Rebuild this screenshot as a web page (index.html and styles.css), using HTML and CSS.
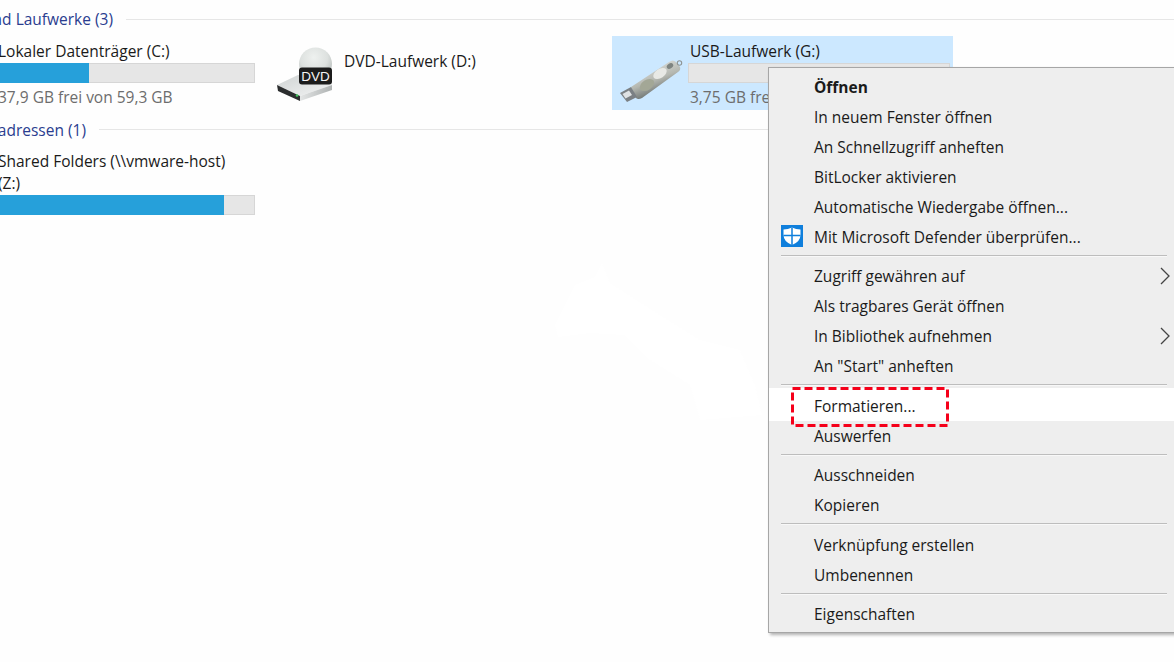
FILE: index.html
```html
<!DOCTYPE html>
<html lang="de">
<head>
<meta charset="utf-8">
<title>Dieser PC</title>
<link rel="stylesheet" href="styles.css">
</head>
<body>
<main class="explorer">
  <header class="group-head">
    <span class="group-label group-label-drives">Geräte und Laufwerke (3)</span>
    <span class="group-rule"></span>
  </header>
  <section class="tiles">
    <article class="tile">
      <div class="tile-icon"></div>
      <div class="tile-body">
        <div class="tile-name">Lokaler Datenträger (C:)</div>
        <div class="bar"><div class="bar-fill bar-fill-c"></div></div>
        <div class="tile-sub">37,9 GB frei von 59,3 GB</div>
      </div>
    </article>
    <article class="tile">
      <div class="tile-icon tile-icon-dvd">
        <svg class="dvd-icon" viewBox="0 0 56 56" width="56" height="56">
          <defs>
            <radialGradient id="discGrad" cx="0.45" cy="0.3" r="0.75">
              <stop offset="0" stop-color="#eef1ef"/>
              <stop offset="0.55" stop-color="#dde1df"/>
              <stop offset="1" stop-color="#aeb4b2"/>
            </radialGradient>
            <linearGradient id="boxTop" x1="0" y1="0" x2="1" y2="1">
              <stop offset="0" stop-color="#cfd3d3"/>
              <stop offset="1" stop-color="#f3f4f4"/>
            </linearGradient>
            <linearGradient id="boxSide" x1="0" y1="0" x2="1" y2="0">
              <stop offset="0" stop-color="#e4e6e6"/>
              <stop offset="1" stop-color="#aeb2b2"/>
            </linearGradient>
          </defs>
          <circle cx="39.500" cy="17" r="16.500" fill="url(#discGrad)"/>
          <path d="M1 38 L22 28 L56 30 L56 38 L24 49 Z" fill="url(#boxTop)"/>
          <path d="M1 38 L24 49 L24 54 L2 44 Z" fill="#2b2d2e"/>
          <path d="M24 49 L56 38 L56 43 L24 54 Z" fill="url(#boxSide)"/>
          <circle cx="21" cy="48.500" r="1.300" fill="#3fc25a"/>
          <rect x="23" y="20.500" width="33" height="17" rx="3" fill="#1c1c1c"/>
          <text class="dvd-label" x="39.500" y="34" text-anchor="middle">DVD</text>
        </svg>
      </div>
      <div class="tile-body tile-body-dvd">
        <div class="tile-name">DVD-Laufwerk (D:)</div>
      </div>
    </article>
    <article class="tile tile-selected">
      <div class="tile-icon tile-icon-usb">
        <svg class="usb-icon" viewBox="0 0 64 48" width="64" height="48">
          <defs>
            <linearGradient id="usbBody" x1="0.35" y1="0.2" x2="0.65" y2="0.8">
              <stop offset="0" stop-color="#d4d6d2"/>
              <stop offset="0.5" stop-color="#b4b7b0"/>
              <stop offset="1" stop-color="#6f7573"/>
            </linearGradient>
          </defs>
          <path d="M12 32 L50 7 Q54 4 57 7 L61 12 Q62 15 59 17 L23 43 Q19 45 17 43 Z" fill="url(#usbBody)"/>
          <ellipse cx="41" cy="18.500" rx="7.500" ry="4.500" transform="rotate(-34 41 18.500)" fill="#e8e9e5"/>
          <ellipse cx="28" cy="30" rx="8" ry="5" transform="rotate(-34 28 30)" fill="#a3a796"/>
          <ellipse cx="51" cy="11" rx="3.500" ry="2.500" transform="rotate(-34 51 11)" fill="#7e8481"/>
          <path d="M1 38 L12 32 L18 42 L8 47 Z" fill="#7b8084"/>
          <path d="M3.500 39 L10 35.500 L13 40 L6.500 43.500 Z" fill="#dfe2e4"/>
          <circle cx="60.500" cy="8" r="2.200" fill="none" stroke="#8f9595" stroke-width="1.100"/>
        </svg>
      </div>
      <div class="tile-body">
        <div class="tile-name">USB-Laufwerk (G:)</div>
        <div class="bar"><div class="bar-fill bar-fill-g"></div></div>
        <div class="tile-sub">3,75 GB frei von 3,75 GB</div>
      </div>
    </article>
  </section>
  <header class="group-head group-head-net">
    <span class="group-label group-label-net">Netzwerkadressen (1)</span>
    <span class="group-rule"></span>
  </header>
  <section class="tiles tiles-net">
    <article class="tile tile-net">
      <div class="tile-icon"></div>
      <div class="tile-body">
        <div class="tile-name">Shared Folders (\\vmware-host)</div>
        <div class="tile-name">(Z:)</div>
        <div class="bar"><div class="bar-fill bar-fill-z"></div></div>
      </div>
    </article>
  </section>
</main>

<svg class="watermark" viewBox="0 0 220 170" width="220" height="170">
  <path d="M5 70 L25 30 L45 22 L52 8 L60 28 L110 60 L150 85 L190 95 L205 130 L212 160 L150 165 L140 130 L100 105 L75 80 L40 78 L8 82 Z" fill="#ffffff"/>
</svg>

<nav class="menu">
  <div class="menu-item menu-item-default">Öffnen</div>
  <div class="menu-item">In neuem Fenster öffnen</div>
  <div class="menu-item">An Schnellzugriff anheften</div>
  <div class="menu-item">BitLocker aktivieren</div>
  <div class="menu-item">Automatische Wiedergabe öffnen...</div>
  <div class="menu-item">
    <svg class="shield" viewBox="0 0 22 22" width="22" height="22">
      <rect width="22" height="22" fill="#0f7fdc"/>
      <path d="M11 2.500 Q15 4.500 19.500 4.500 L19.500 10 Q19.500 16.500 11 20 Q2.500 16.500 2.500 10 L2.500 4.500 Q7 4.500 11 2.500 Z" fill="#ffffff"/>
      <path d="M11 2.500 V20 M2.500 10.500 H19.500" stroke="#0f7fdc" stroke-width="1.500"/>
    </svg>
    Mit Microsoft Defender überprüfen...
  </div>
  <div class="menu-sep"></div>
  <div class="menu-item">Zugriff gewähren auf
    <svg class="chevron" viewBox="0 0 10 18" width="10" height="18"><path d="M1 1 L9 9 L1 17" fill="none" stroke="#444" stroke-width="1.300"/></svg>
  </div>
  <div class="menu-item">Als tragbares Gerät öffnen</div>
  <div class="menu-item">In Bibliothek aufnehmen
    <svg class="chevron" viewBox="0 0 10 18" width="10" height="18"><path d="M1 1 L9 9 L1 17" fill="none" stroke="#444" stroke-width="1.300"/></svg>
  </div>
  <div class="menu-item">An "Start" anheften</div>
  <div class="menu-sep"></div>
  <div class="menu-item menu-item-hot">Formatieren...
    <svg class="callout" viewBox="0 0 158 40" width="158" height="40">
      <rect x="1.500" y="1.500" width="155" height="37" fill="none" stroke="#f5001a" stroke-width="3" stroke-dasharray="8 4"/>
    </svg>
  </div>
  <div class="menu-item">Auswerfen</div>
  <div class="menu-sep"></div>
  <div class="menu-item">Ausschneiden</div>
  <div class="menu-item">Kopieren</div>
  <div class="menu-sep"></div>
  <div class="menu-item">Verknüpfung erstellen</div>
  <div class="menu-item">Umbenennen</div>
  <div class="menu-sep"></div>
  <div class="menu-item">Eigenschaften</div>
</nav>
</body>
</html>
```
FILE: styles.css
```css
html, body {
  margin: 0;
  height: 662px;
  overflow: hidden;
  background: #fefefe;
}
body {
  font-family: "Open Sans", "Noto Sans", "Liberation Sans", sans-serif;
  font-size: 15.500px;
  color: #1a1a1a;
  position: relative;
}
.explorer {
  margin-left: -80px;
  padding-top: 8px;
}
.group-head {
  display: flex;
  align-items: center;
  height: 22px;
  color: #2a3d8f;
}
.group-head-net {
  margin-top: 8.500px;
}
.group-label {
  display: block;
  text-align: right;
  white-space: nowrap;
  flex: none;
}
.group-label-drives { width: 193px; }
.group-label-net { width: 166px; }
.group-rule {
  flex: 1;
  height: 1px;
  margin-left: 13px;
  background: #e6e6e6;
}
.tiles {
  display: grid;
  grid-template-columns: repeat(3, 341px);
  column-gap: 5px;
  margin-top: 6px;
}
.tiles-net { margin-top: 5.500px; }
.tile {
  display: flex;
  height: 74px;
  box-sizing: border-box;
  padding-top: 4px;
}
.tile-net { height: auto; }
.tile-selected { background: #cce8ff; }
.tile-selected .bar { margin-right: -3px; }
.tile-icon {
  flex: none;
  width: 76px;
}
.tile-icon-dvd { padding: 7px 0 0 10px; box-sizing: border-box; }
.tile-icon-usb { padding: 15px 0 0 7px; box-sizing: border-box; }
.tile-body { width: 259px; }
.tile-body-dvd { padding-top: 10px; }
.tile-name {
  line-height: 22px;
  padding-left: 2px;
  white-space: nowrap;
}
.tile-sub {
  line-height: 22px;
  margin-top: 3px;
  padding-left: 2px;
  color: #6d6d6d;
  white-space: nowrap;
}
.bar {
  height: 20px;
  margin-top: 1px;
  background: #e6e6e6;
  box-shadow: inset 0 0 0 1px #d6d6d6;
}
.bar-fill { height: 100%; background: #26a0da; }
.bar-fill-c { width: 93px; }
.bar-fill-g { width: 0; }
.bar-fill-z { width: 228px; }
.dvd-icon, .usb-icon, .shield, .chevron { display: block; }
.dvd-label {
  font-family: "Liberation Sans", sans-serif;
  font-size: 13.500px;
  fill: #f4f4f4;
}
.watermark {
  position: absolute;
  left: 550px;
  top: 255px;
}
.menu {
  position: absolute;
  left: 768px;
  top: 67px;
  width: 420px;
  box-sizing: border-box;
  padding: 3.500px 0 2.500px;
  background: #eeeeee;
  border: 1px solid #a6a6a6;
  box-shadow: 2px 2px 3px rgba(0, 0, 0, 0.3);
}
.menu-item {
  position: relative;
  display: flex;
  align-items: center;
  height: 30px;
  padding-left: 45px;
  white-space: nowrap;
  color: #1a1a1a;
}
.menu-item-default { font-weight: 700; }
.menu-item-hot {
  background: #ffffff;
  margin-top: -3px;
  height: 33px;
  padding-top: 3px;
  box-sizing: border-box;
}
.menu-sep {
  height: 9.500px;
  margin-right: 20px;
  margin-left: 12px;
  position: relative;
}
.menu-sep::before {
  content: "";
  position: absolute;
  left: 0;
  right: 0;
  top: 3px;
  height: 1px;
  background: #bdbdbd;
  border-bottom: 1px solid #f8f8f8;
}
.shield {
  position: absolute;
  left: 12px;
  top: 3px;
}
.chevron {
  position: absolute;
  left: 391px;
  top: 6px;
}
.callout {
  position: absolute;
  left: 22px;
  top: -1px;
}
```
